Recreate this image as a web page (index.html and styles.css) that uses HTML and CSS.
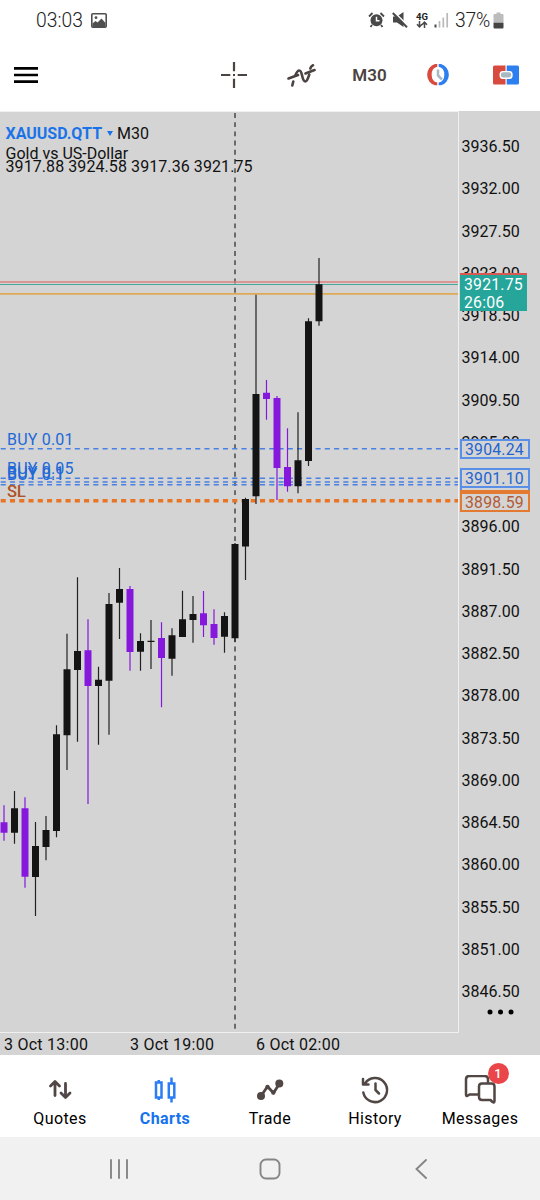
FILE: index.html
```html
<!DOCTYPE html>
<html lang="en">
<head>
    <meta charset="UTF-8">
    <meta name="viewport" content="width=device-width, initial-scale=1.0">
    <title>XAUUSD.QTT M30</title>
    <link rel="stylesheet" href="styles.css">
</head>
<body>

    <div class="status-bar">
        <span class="clock">03:03</span>
        <svg class="picture" width="16" height="15" viewBox="0 0 16 15">
            <rect x="0.8" y="0.8" width="14.4" height="13.4" rx="1" fill="none" stroke="#505050" stroke-width="1.6"/>
            <path d="M1.5 14V10.5l3-2.5 2 1.5L10.500 5.500l4 4.500v4z" fill="#505050"/>
            <circle cx="5" cy="4.700" r="1.400" fill="#505050"/>
        </svg>
        <div class="status-icons">
            <svg width="17" height="16" viewBox="0 0 17 16">
                <circle cx="8.500" cy="8.300" r="6" fill="#484848"/>
                <path d="M8.500 4.800v4h3" fill="none" stroke="#fff" stroke-width="1.500"/>
                <path d="M1 4.500L4.500 1M16 4.500L12.500 1M4 13l-1.500 2M13 13l1.500 2" stroke="#484848" stroke-width="1.800"/>
            </svg>
            <svg class="mute" width="16" height="16" viewBox="0 0 16 16">
                <path d="M1 4.500h4l6.500-4.500v15l-6.500-4.500H1z" fill="#484848"/>
                <path d="M2 0L16 14" stroke="#fff" stroke-width="1.800"/>
                <path d="M0.800 1L15 15.200" stroke="#484848" stroke-width="2"/>
            </svg>
            <div class="network">
                <span>4G</span>
                <svg width="12" height="7" viewBox="0 0 12 7">
                    <path d="M3.500 0v5.500M1 3.200l2.500 2.600L6 3.200M8.500 7V1.200M6 3.800l2.500-2.600L11 3.800" fill="none" stroke="#484848" stroke-width="1.500"/>
                </svg>
            </div>
            <svg class="signal" width="15" height="16" viewBox="0 0 15 16">
                <path d="M1.500 12.500V15.500" stroke="#484848" stroke-width="2"/>
                <path d="M5.500 9v6.500M9.300 5.500v10M13.200 1v14.500" stroke="#b9b9b9" stroke-width="1.700"/>
            </svg>
            <span class="percent">37%</span>
            <svg class="battery" width="11" height="17" viewBox="0 0 11 17">
                <path d="M3.500 0.500h4v1.500h2q1 0 1 1V10h-10V3q0-1 1-1h2z" fill="#bcbcbc"/>
                <path d="M0.500 10.500h10v5q0 1-1 1h-8q-1 0-1-1z" fill="#444"/>
            </svg>
        </div>
    </div>

    <div class="toolbar">
        <svg class="menu" width="24" height="18" viewBox="0 0 24 18">
            <path d="M0 2.400h24M0 9h24M0 15.600h24" stroke="#000" stroke-width="2.700"/>
        </svg>
        <div class="tool">
            <svg width="28" height="28" viewBox="0 0 28 28">
                <path d="M14 1v9.300M14 17.700V27M1 14h9.300M17.700 14H27" stroke="#4a4341" stroke-width="2.200"/>
                <rect x="13" y="13" width="2" height="2" fill="#4a4341"/>
            </svg>
        </div>
        <div class="tool">
            <svg width="30" height="28" viewBox="0 0 30 28">
                <path d="M1.500 17.500L11 14M18.500 12.500L27.500 9" class="indicator"/>
                <path d="M5.300 24.500L6.300 20.500M8.300 14.500C9.500 11.500 10.500 9.500 12.300 9.500C15.800 9.500 14.500 20.500 18.300 20.500C20.500 20.500 21.300 16 22.300 13.500" class="indicator"/>
                <path d="M23.300 7.500C23.800 6 24.500 4.800 26 4.300" class="indicator"/>
            </svg>
        </div>
        <div class="tool">M30</div>
        <div class="tool">
            <svg width="28" height="24" viewBox="0 0 28 24">
                <path d="M13.300 1H11A10.500 11 0 0 0 11 22.300H13.300V19.500A7 8 0 0 1 13.300 3.800z" fill="#d94a3e"/>
                <path d="M14.700 1H17A10.500 11 0 0 1 17 22.300H14.700V19.500A7 8 0 0 0 14.700 3.800z" fill="#2d7ff0"/>
                <path d="M14 6.500v6l4 4" fill="none" stroke="#a9b9c4" stroke-width="2.500"/>
            </svg>
        </div>
        <div class="tool">
            <svg width="28" height="22" viewBox="0 0 28 22">
                <path d="M2.500 1.500h11v5.500h-3q-3 0-3 4t3 4h3v5.500h-11q-1.500 0-1.500-1.500V3q0-1.500 1.500-1.500z" fill="#d94a3e"/>
                <path d="M25.500 1.500H14.700v5.500h3q3 0 3 4t-3 4h-3v5.500h10.800q1.500 0 1.500-1.500V3q0-1.500-1.500-1.500z" fill="#2d7ff0"/>
                <rect x="8.800" y="8.300" width="10.500" height="5.200" rx="2.400" fill="#a9b9c4"/>
            </svg>
        </div>
    </div>

    <div class="chart">
        <div class="plot">
            <svg class="candles" width="458" height="920" viewBox="0 112 458 920">
                <path class="separator" d="M235 113V1032"/>

                <!-- bid, ask and last price -->
                <path class="ask" d="M0 282H458"/>
                <path class="bid" d="M0 284.500H458"/>
                <path class="last" d="M0 293.900H458"/>

                <!-- open positions and stop loss -->
                <path class="position" d="M0.700 448.700H458"/>
                <path class="position" d="M0.700 478.300H458M0.700 482H458M0.700 484.700H458"/>
                <path class="stop" d="M0.700 500.700H458"/>

                <path class="wick" d="M14.500 791V843.700M35.500 822V916M46 816V860.300M56.500 725.300V837.300M67 633.700V770M77.500 577.300V741.700M98.500 666.700V744.700M109 593V734.700M119.500 568V639M140.500 633.300V670.700M151 620V669M172 628.300V675.700M182.500 590.700V637M193 596V642.700M224.500 612.300V652.700M235 543V642M245.500 497.700V580M256 294.700V504M298 412.300V493.300M308.500 318.300V466M319 258V325.700"/>
                <path class="body" d="M14.500 808.300V832.700M35.500 846V877M46 830V847M56.500 734.300V831M67 669.300V735.300M77.500 651V670M98.500 679.700V686M109 604V680.700M119.500 589V602.700M140.500 641V651.700M151 640.800V641.900M172 635.300V658.700M182.500 619.300V637M193 614V620M224.500 616V636.700M235 544V638.300M245.500 499V546.500M256 394V496.300M298 460.300V486.300M308.500 321.300V461M319 284.300V321.300"/>
                <path class="wick down" d="M4 805.300V840.700M25 797.300V887.700M88 619.300V804M130 586V670.700M161.500 622.300V707.300M203.500 591V637M214 609.300V644.700M266.500 380V419.700M277 396V500M287.500 428.300V491.700"/>
                <path class="body down" d="M4 822.300V832.700M25 808.300V876.700M88 650.300V686M130 589V652M161.500 638V658M203.500 613.300V625.300M214 624V638M266.500 392.700V399M277 398V468M287.500 467V486.300"/>

                <g class="order-label">
                    <text x="7" y="444.500">BUY 0.01</text>
                    <text x="7" y="474">BUY 0.05</text>
                    <text x="7" y="477.500">BUY 0.1</text>
                    <text x="7" y="480">BUY 0.1</text>
                </g>
                <g class="order-label sl">
                    <text x="7" y="496.500">SL</text>
                    <text x="7.500" y="497">SL</text>
                </g>
            </svg>
            <div class="info">
                <div class="symbol"><b>XAUUSD.QTT</b> <i></i> M30</div>
                <div class="name">Gold vs US-Dollar</div>
                <div class="ohlc">3917.88 3924.58 3917.36 3921.75</div>
            </div>
        </div>

        <div class="prices">
            <span>3936.50</span>
            <span>3932.00</span>
            <span>3927.50</span>
            <span>3923.00</span>
            <span>3918.50</span>
            <span>3914.00</span>
            <span>3909.50</span>
            <span>3905.00</span>
            <span>3900.50</span>
            <span>3896.00</span>
            <span>3891.50</span>
            <span>3887.00</span>
            <span>3882.50</span>
            <span>3878.00</span>
            <span>3873.50</span>
            <span>3869.00</span>
            <span>3864.50</span>
            <span>3860.00</span>
            <span>3855.50</span>
            <span>3851.00</span>
            <span>3846.50</span>
            <div class="tag current">3921.75<br>26:06</div>
            <div class="tag buy first">3904.24</div>
            <div class="tag buy third"></div>
            <div class="tag buy second">3901.10</div>
            <div class="tag loss under"></div>
            <div class="tag loss">3898.59</div>
            <svg class="more" width="28" height="6" viewBox="0 0 28 6">
                <circle cx="3" cy="3" r="2.500"/>
                <circle cx="13.500" cy="3" r="2.500"/>
                <circle cx="24" cy="3" r="2.500"/>
            </svg>
        </div>

        <div class="times">
            <span>3 Oct 13:00</span>
            <span>3 Oct 19:00</span>
            <span>6 Oct 02:00</span>
        </div>
    </div>

    <div class="tabs">
        <div class="tab">
            <svg width="36" height="30" viewBox="0 0 36 30">
                <path d="M13 20.500V7M8.500 11L13 6.500L17.500 11M23.500 8.500V22M19 18L23.500 22.500L28 18" class="line"/>
            </svg>
            Quotes
        </div>
        <div class="tab active">
            <svg width="36" height="30" viewBox="0 0 36 30">
                <path d="M9 7.500h5.500v15H9zM21.800 8.500h5.500v14h-5.500zM11.800 5v2.500M11.800 22.500v2.500M24.500 2.500v6M24.500 22.500v5" fill="none" stroke="#2b7df3" stroke-width="2.500"/>
            </svg>
            Charts
        </div>
        <div class="tab">
            <svg width="36" height="30" viewBox="0 0 36 30">
                <path d="M9 21L15.500 11.500L21.500 18L27.500 8.500" class="line"/>
                <circle cx="9" cy="21" r="4"/>
                <circle cx="15.500" cy="12" r="2.200"/>
                <circle cx="21.300" cy="17.500" r="2.200"/>
                <circle cx="27.300" cy="8.500" r="4"/>
            </svg>
            Trade
        </div>
        <div class="tab">
            <svg width="36" height="30" viewBox="0 0 36 30">
                <path d="M6.300 17.500A12 12 0 1 0 8 8.500M6 4V9.500H11.500M18.500 8.500V15L22 18.500" class="line thin"/>
            </svg>
            History
        </div>
        <div class="tab">
            <svg width="36" height="30" viewBox="0 0 36 30">
                <path d="M26 8V4.500Q26 1 22.500 1H7.500Q4 1 4 4.500V19.500Q4 22 6 20.500L7.500 19.500H16" class="line thin"/>
                <path d="M20 8.500H29.500Q32.500 8.500 32.500 11.500V26Q32.500 28.300 30.500 27L28.500 25H20Q17 25 17 22V11.500Q17 8.500 20 8.500z" class="line thin"/>
            </svg>
            Messages
            <span class="badge">1</span>
        </div>
    </div>

    <div class="system-nav">
        <svg width="24" height="24" viewBox="0 0 24 24">
            <path d="M4 3V21M12 3V21M20 3V21"/>
        </svg>
        <svg width="24" height="24" viewBox="0 0 24 24">
            <rect x="2.500" y="2.500" width="19" height="19" rx="5.500"/>
        </svg>
        <svg width="24" height="24" viewBox="0 0 24 24">
            <path d="M17 3L7.500 12L17 21"/>
        </svg>
    </div>

</body>
</html>
```
FILE: styles.css
```css
* {
    box-sizing: border-box;
}

body {
    margin: 0;
    width: 540px;
    height: 1200px;
    overflow: hidden;
    background-color: #fff;
    font-family: Roboto, sans-serif;
    color: #111;
}

svg {
    display: block;
    flex: none;
}

.status-bar {
    display: flex;
    align-items: center;
    height: 39px;
    padding: 1px 36px 0 36px;
    font-size: 19.3px;
    font-weight: 300;
    color: #222;
}

.picture {
    margin-left: 8px;
}

.status-icons {
    display: flex;
    align-items: center;
    margin-left: auto;
}

.mute {
    margin-left: 7px;
}

.network {
    display: flex;
    flex-direction: column;
    align-items: center;
    width: 14px;
    margin-left: 7px;
    font-size: 9.5px;
    line-height: 9px;
    font-weight: 700;
}

.signal {
    margin-left: 5px;
}

.percent {
    margin-left: 6px;
    letter-spacing: -0.2px;
}

.battery {
    margin-left: 3px;
}

.toolbar {
    display: flex;
    align-items: center;
    height: 72px;
    padding: 0 0.5px 1px 14px;
}

.menu {
    margin-right: auto;
}

.tool {
    display: flex;
    justify-content: center;
    width: 68px;
    font-size: 17px;
    font-weight: 600;
    color: #4a4341;
}

.indicator {
    fill: none;
    stroke: #4a4341;
    stroke-width: 2.6;
    stroke-linecap: round;
}

.chart {
    display: grid;
    grid-template-columns: 459px 81px;
    grid-template-rows: 922px 22px;
    height: 944px;
    background-color: #d4d4d4;
}

.plot {
    position: relative;
    border: 1px solid #f0f0f0;
    border-left: none;
}

.info {
    position: absolute;
    top: 10px;
    left: 5.5px;
    font-size: 16px;
    white-space: nowrap;
}

.symbol {
    display: flex;
    align-items: center;
    height: 22px;
}

.symbol b {
    color: #1a73e8;
}

.symbol i {
    margin: 0 4px 0 5px;
    border: 3px solid transparent;
    border-top: 5px solid #1a73e8;
    border-bottom: none;
}

.name {
    height: 13px;
    line-height: 19px;
}

.ohlc {
    line-height: 19px;
    letter-spacing: 0.08px;
}

.separator {
    stroke: #333;
    stroke-width: 1.3;
    stroke-dasharray: 4.9 4.3;
}

.ask {
    stroke: #dc7f7b;
    stroke-width: 1.5;
}

.bid {
    stroke: #45a79d;
    stroke-width: 1.2;
}

.last {
    stroke: #deaa55;
    stroke-width: 1.8;
}

.position {
    stroke: #4880e4;
    stroke-width: 1.4;
    stroke-dasharray: 5.1 4.16;
}

.stop {
    stroke: #e87524;
    stroke-width: 3.4;
    stroke-dasharray: 5.1 4.16;
}

.wick {
    stroke: #222;
    stroke-width: 1.2;
}

.body {
    stroke: #141414;
    stroke-width: 7;
}

.down {
    stroke: #8518dc;
}

.order-label {
    fill: #2068d8;
    font-size: 16px;
    letter-spacing: 0.2px;
}

.sl {
    fill: #b05428;
}

.prices {
    position: relative;
    display: flex;
    flex-direction: column;
    padding: 15px 0 0 2.5px;
    font-size: 16px;
}

.prices > span {
    height: 42.25px;
    line-height: 42.25px;
}

.tag {
    position: absolute;
    left: 1px;
    width: 70px;
    height: 20px;
    padding-left: 3px;
    background-color: #d4d4d4;
    font-size: 15.8px;
    line-height: 17px;
    letter-spacing: 0.2px;
}

.current {
    top: 162px;
    width: 67px;
    height: 38px;
    padding-left: 4px;
    border-top: 2px solid #dc5750;
    background-color: #26a69a;
    color: #fff;
    line-height: 18px;
    padding-top: 1px;
}

.buy {
    border: 2px solid #5a8fe8;
    color: #2464cf;
}

.first {
    top: 328px;
}

.second {
    top: 357px;
}

.third {
    top: 361px;
}

.loss {
    top: 381px;
    border: 2px solid #e27a32;
    color: #b25a35;
}

.under {
    top: 379px;
}

.more {
    position: absolute;
    top: 898px;
    left: 28px;
}

.times {
    grid-column: span 2;
    display: flex;
    padding-left: 4px;
    font-size: 16px;
    line-height: 23px;
    letter-spacing: 0.25px;
}

.times span {
    width: 126px;
    white-space: nowrap;
}

.tabs {
    display: flex;
    height: 82px;
    padding: 0 7.5px;
    background-color: #fff;
}

.tab {
    position: relative;
    display: flex;
    flex-direction: column;
    align-items: center;
    width: 105px;
    padding-top: 20px;
    font-size: 16px;
    line-height: 28px;
    letter-spacing: 0.4px;
    color: #000;
}

.tab svg {
    fill: #514744;
}

.tab .line {
    fill: none;
    stroke: #514744;
    stroke-width: 2.8;
    stroke-linecap: round;
    stroke-linejoin: round;
}

.tab .thin {
    stroke-width: 2.5;
}

.active {
    font-weight: 700;
    color: #1672ee;
}

.badge {
    position: absolute;
    top: 8px;
    left: 60px;
    width: 21px;
    height: 21px;
    border-radius: 50%;
    background-color: #ea4549;
    color: #fff;
    font-size: 13px;
    font-weight: 500;
    line-height: 21px;
    letter-spacing: 0;
    text-align: center;
}

.system-nav {
    display: flex;
    justify-content: space-between;
    align-items: center;
    height: 63px;
    padding: 0 107px;
    background-color: #f1f1f1;
}

.system-nav svg {
    fill: none;
    stroke: #858585;
    stroke-width: 1.9;
    stroke-linecap: round;
}
```
